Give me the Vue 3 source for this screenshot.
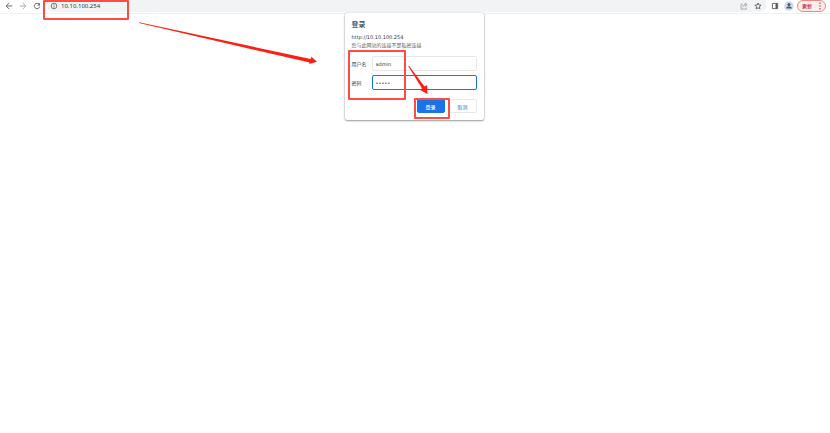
<script setup>
import { ref } from 'vue'

const address = ref('10.10.100.254')
const username = ref('admin')
const password = ref('admin')
</script>

<template>
  <div class="browser">
    <header class="toolbar">
      <nav class="nav">
        <button class="icon" type="button" aria-label="后退">
          <svg viewBox="0 0 8 8"><path d="M7.300 4H1.200M4.200 1L1.100 4L4.200 7" /></svg>
        </button>
        <button class="icon faded" type="button" aria-label="前进">
          <svg viewBox="0 0 8 8"><path d="M.7 4h6.100M3.800 1L6.900 4L3.800 7" /></svg>
        </button>
        <button class="icon" type="button" aria-label="刷新">
          <svg viewBox="0 0 8 8"><path d="M6.3 2.5A2.7 2.7 0 1 0 6.7 4.5" /><path class="solid" d="M6.9 .8V3.6H4.1z" /></svg>
        </button>
      </nav>
      <div class="omnibox">
        <svg class="glyph info" viewBox="0 0 8 8"><circle cx="4" cy="4" r="2.8" /><path d="M4 3.7v1.9M4 2.2v.8" /></svg>
        <input v-model="address" class="address" type="text" aria-label="地址" />
        <button class="icon faded" type="button" aria-label="分享">
          <svg viewBox="0 0 8 8"><path d="M2.8 2.2H1v4.9h5.4V5.6M2.7 5.2C3 3.5 4 2.7 5.2 2.7M5.1 1.2L7.2 2.8L5.1 4.4z" /></svg>
        </button>
        <button class="icon" type="button" aria-label="收藏">
          <svg viewBox="0 0 8 8"><path d="M4 1l.9 2 2.2.2-1.7 1.5.5 2.2L4 5.8 2.1 6.9l.5-2.2L.9 3.2 3.1 3z" /></svg>
        </button>
      </div>
      <button class="icon panel" type="button" aria-label="侧边栏">
        <svg viewBox="0 0 8 8"><path d="M1.4 1.4h5.2v5.2H1.4z" /><path class="solid" d="M4.5 1.4h2.1v5.2H4.5z" /></svg>
      </button>
      <button class="icon avatar" type="button" aria-label="用户">
        <svg viewBox="0 0 10 10"><circle class="disc" cx="5" cy="5" r="4.8" /><circle class="person" cx="5" cy="3.6" r="1.6" /><path class="person" d="M2.2 7.6V6.9C2.2 5.8 4 5.5 5 5.5s2.8.3 2.8 1.4v.7z" /></svg>
      </button>
      <button class="update" type="button">
        <span>更新</span>
        <svg class="dots" viewBox="0 0 2 8"><circle cx="1" cy="1.300" r=".7" /><circle cx="1" cy="4" r=".7" /><circle cx="1" cy="6.700" r=".7" /></svg>
      </button>
      <span class="mark mark-address"></span>
      <svg class="mark-arrow" viewBox="0 0 180 42"><path d="M1 .3L172.500 37L173.500 34.800L179 39.700L171 42L171.700 40.600L1 1Z" /></svg>
    </header>

    <main class="page">
      <form class="dialog" @submit.prevent>
        <h1>登录</h1>
        <p class="origin">http://10.10.100.254</p>
        <p class="notice">您与此网站的连接不是私密连接</p>
        <div class="fields">
          <label for="user">用户名</label>
          <input id="user" v-model="username" type="text" />
          <label for="pass">密码</label>
          <input id="pass" v-model="password" class="focused" type="password" />
        </div>
        <div class="actions">
          <button class="primary" type="submit">登录</button>
          <button class="secondary" type="button">取消</button>
        </div>
        <span class="mark mark-fields"></span>
        <span class="mark mark-submit"></span>
        <svg class="mark-pointer" viewBox="0 0 21 30"><path d="M.3 1.200L1 .8L16.500 21.500L19 20L19.500 29L12 25L14 23.500Z" /></svg>
      </form>
    </main>
  </div>
</template>

<style>
body {
  margin: 0;
  background: #fff;
}
</style>

<style scoped>
.browser {
  min-height: 100vh;
  font-family: "Noto Sans", "Noto Sans CJK SC", sans-serif;
  font-size: 5px;
  color: #333639;
}
.browser * {
  box-sizing: border-box;
}
button,
input {
  margin: 0;
  padding: 0;
  border: 0;
  background: none;
  font: inherit;
  color: inherit;
  outline: none;
}
.toolbar {
  position: relative;
  display: flex;
  align-items: flex-start;
  height: 14px;
  padding-right: 4px;
  border-bottom: 1px solid #eff0f1;
}
.nav {
  display: flex;
  gap: 6px;
  padding: 2px 6px 0 5px;
}
.icon {
  display: flex;
  flex: none;
  width: 8px;
  height: 8px;
}
.icon svg,
.glyph {
  width: 100%;
  height: 100%;
  fill: none;
  stroke: #5a5d61;
  stroke-width: 0.9;
}
.icon.faded svg {
  stroke: #a5a7aa;
}
.icon .solid {
  fill: #5a5d61;
  stroke: none;
}
.omnibox {
  display: flex;
  flex: 1;
  align-items: center;
  gap: 6px;
  height: 12px;
  padding: 0 4px 0 3px;
  border-radius: 0 0 6px 6px;
  background: #f1f3f4;
}
.glyph.info {
  flex: none;
  width: 8px;
  height: 8px;
  margin-right: -3px;
  stroke-width: 0.8;
}
.address {
  flex: 1;
  min-width: 0;
  height: 12px;
  font-size: 6px;
  line-height: 12px;
}
.panel {
  margin: 2px 5px 0;
}
.icon.avatar {
  width: 10px;
  height: 10px;
  margin: 1px 3px 0 0;
}
.icon .disc {
  fill: #d3dcec;
  stroke: none;
}
.icon .person {
  fill: #4d5d78;
  stroke: none;
}
.update {
  display: flex;
  align-items: center;
  justify-content: space-between;
  width: 29px;
  height: 12px;
  padding: 0 4px;
  border: 1px solid #e58a84;
  border-radius: 6px;
  background: #fdeeed;
  color: #c5221f;
  font-weight: 500;
  line-height: 8px;
}
.dots {
  width: 2px;
  height: 8px;
  fill: #c5221f;
}
.page {
  display: flex;
  justify-content: center;
  padding-right: 2px;
}
.dialog {
  position: relative;
  width: 139px;
  margin-top: -1px;
  padding: 7px;
  border-radius: 2px;
  background: #fff;
  box-shadow: 0 1px 2px rgba(0, 0, 0, 0.35), 0 0 2px rgba(0, 0, 0, 0.25);
}
h1,
p {
  margin: 0;
}
h1 {
  font-size: 7px;
  font-weight: 500;
  line-height: 10px;
}
.origin {
  margin-top: 3px;
  font-family: "DejaVu Sans", sans-serif;
  line-height: 8px;
}
.notice {
  color: #5f6368;
  line-height: 9px;
}
.fields {
  display: grid;
  grid-template-columns: 20px 1fr;
  align-items: center;
  row-gap: 4px;
  margin-top: 6px;
}
.fields input {
  width: 100%;
  min-width: 0;
  height: 15px;
  padding: 0 3px;
  border: 1px solid #e7e8ea;
  border-radius: 2px;
  font-family: "DejaVu Sans", sans-serif;
}
.fields .focused {
  border-color: #1a73e8;
}
.actions {
  display: flex;
  justify-content: flex-end;
  gap: 4px;
  margin-top: 9px;
}
.actions button {
  width: 28px;
  height: 14px;
  border: 1px solid #e7e8ea;
  border-radius: 2px;
  color: #1a73e8;
}
.actions .primary {
  border-color: #1a73e8;
  background: #1a73e8;
  color: #fff;
  font-weight: 500;
}
.mark {
  position: absolute;
  border: 2px solid #fc4d42;
  border-radius: 1px;
  pointer-events: none;
}
.mark-address {
  top: 0;
  left: 43px;
  width: 86px;
  height: 20px;
}
.mark-fields {
  top: 37px;
  left: 3px;
  width: 58px;
  height: 50px;
}
.mark-submit {
  top: 85px;
  left: 69px;
  width: 36px;
  height: 21px;
}
.mark-arrow,
.mark-pointer {
  position: absolute;
  fill: #fb2013;
  pointer-events: none;
}
.mark-arrow {
  top: 22px;
  left: 138px;
  width: 180px;
  height: 42px;
}
.mark-pointer {
  top: 52px;
  left: 63px;
  width: 21px;
  height: 30px;
}
</style>
